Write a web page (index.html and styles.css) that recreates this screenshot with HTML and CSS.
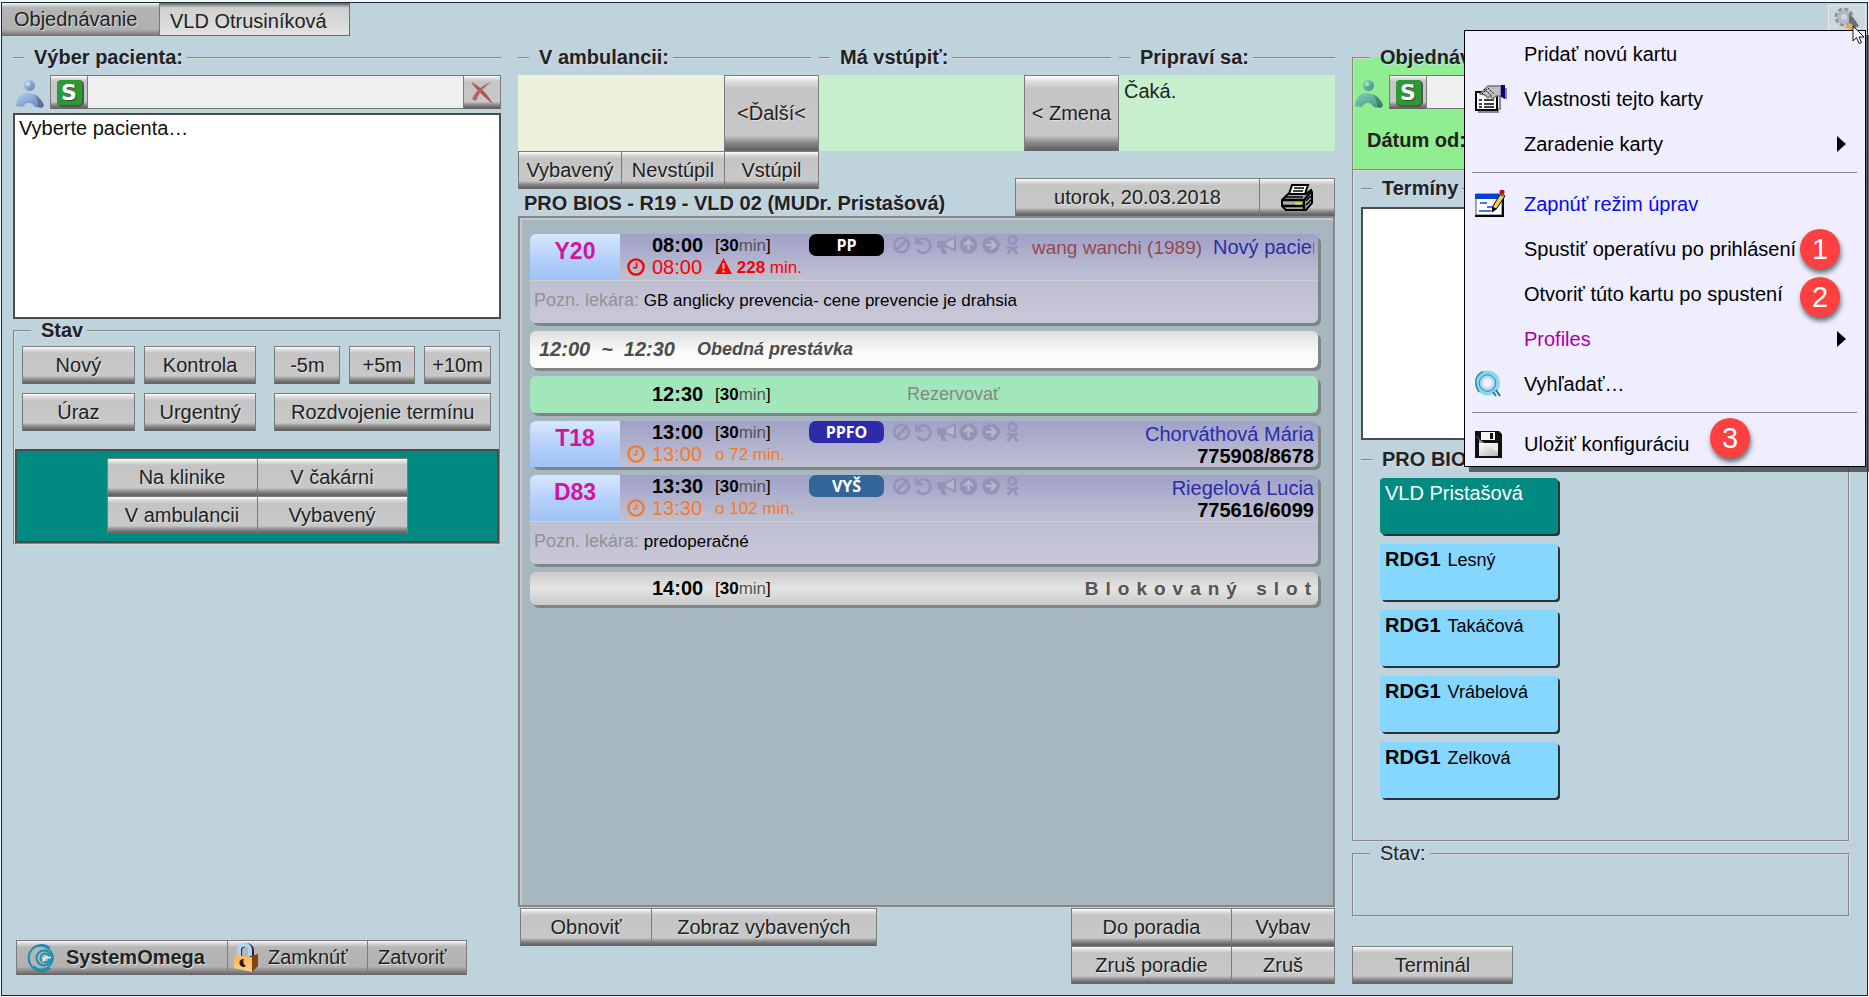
FILE: index.html
```html
<!DOCTYPE html>
<html lang="sk">
<head>
<meta charset="utf-8">
<title>VLD Otrusiníková</title>
<link rel="stylesheet" href="styles.css">
</head>
<body>
<svg class="sprite" aria-hidden="true">
  <defs>
    <linearGradient id="blueMan" x1="0" y1="0" x2="1" y2="1"><stop offset="0" stop-color="#b4cdec"/><stop offset="1" stop-color="#5f7fb5"/></linearGradient>
    <linearGradient id="greenMan" x1="0" y1="0" x2="1" y2="1"><stop offset="0" stop-color="#84cdb8"/><stop offset="1" stop-color="#3f927c"/></linearGradient>
    <radialGradient id="lens"><stop offset="0" stop-color="#ffffff"/><stop offset=".35" stop-color="#e8f0ff"/><stop offset="1" stop-color="#6f9cf0"/></radialGradient>
    <linearGradient id="disk" x1="0" y1="0" x2="1" y2="1"><stop offset="0" stop-color="#fff"/><stop offset="1" stop-color="#b5b5b5"/></linearGradient>
    <linearGradient id="lockBody" x1="0" y1="0" x2="0" y2="1"><stop offset="0" stop-color="#f3b562"/><stop offset="1" stop-color="#ffd084"/></linearGradient>
  </defs>
  <symbol id="man" viewBox="0 0 28 28">
    <path d="M0 26C1 17 5 13 11 13c8 0 14 5 17 12l-2 3-7-1c-2-2-3-4-6-4-3 0-5 2-6 4z"/>
    <path d="M18 14c5 2 8 6 10 11l-2 3-4-1c0-5-1-9-4-13z" fill="#000" opacity=".2"/>
    <circle cx="13.500" cy="5.500" r="5.500"/>
    <circle cx="12" cy="4" r="2.200" fill="#fff" opacity=".45"/>
  </symbol>
  <symbol id="clock" viewBox="0 0 18 18">
    <circle cx="9" cy="9" r="7.600" fill="none" stroke="currentColor" stroke-width="2.400"/>
    <path d="M9.500 4.500v5.200H6" fill="none" stroke="currentColor" stroke-width="1.600"/>
  </symbol>
  <symbol id="flags" viewBox="0 0 127 20">
    <g fill="none" stroke="currentColor" stroke-width="2.500">
      <circle cx="8.500" cy="10" r="7.300"/><path d="M3.500 15 13.500 5"/>
      <path d="M25 5.500A7.300 7.300 0 1 1 24 14.500"/>
      <circle cx="119.500" cy="5" r="3.800"/>
      <path d="M114 11.500c3.500 2 7.500 2 11 0M119.500 13l-5 6M119.500 13l5 6"/>
    </g>
    <path fill="currentColor" d="M22 1v8.500h8.500zM44 6h8l11-5v16l-9-4.500-3 .5 3 6h-5l-2-6h-3z"/>
    <path fill="#b4b6d0" d="M53.500 7.500 61 4v9.500l-7.500-3z"/>
    <circle cx="75.500" cy="10" r="8.800" fill="currentColor"/>
    <path d="M75.500 15V6M71 10l4.500-4.500L80 10" fill="none" stroke="#b5b7d0" stroke-width="2.400"/>
    <circle cx="98" cy="10" r="8.800" fill="currentColor"/>
    <path d="M93 10h9M98 5.500 102.500 10 98 14.500" fill="none" stroke="#b5b7d0" stroke-width="2.400"/>
  </symbol>
</svg>

<div class="window">
  <header class="topbar">
    <div class="tabs" role="tablist">
      <button class="tab" role="tab">Objednávanie</button>
      <button class="tab tab-active" role="tab" aria-selected="true">VLD Otrusiníková</button>
    </div>
    <div class="settings">
      <button class="gear" aria-label="Nastavenia">
        <svg width="26" height="24" viewBox="0 0 26 24">
          <circle cx="10" cy="9" r="7" fill="none" stroke="#8d919f" stroke-width="5" stroke-dasharray="3.600 1.900"/>
          <circle cx="10" cy="9" r="5" fill="none" stroke="#b3b6c8" stroke-width="4"/>
          <path d="m15 5 6 7 4 6-4 2-6-6z" fill="#6d6f72"/>
          <path d="m10 19 5-4 5 5-1 3z" fill="#e7ab55"/>
        </svg>
      </button>
      <ul class="menu" role="menu">
        <li><button class="menu-item" role="menuitem"><span class="menu-icon"></span>Pridať novú kartu</button></li>
        <li><button class="menu-item" role="menuitem"><span class="menu-icon">
          <svg width="32" height="28" viewBox="0 0 32 28">
            <path d="M3 27h20v-3h2V11" fill="none" stroke="#888" stroke-width="2"/>
            <rect x="1" y="7" width="21" height="18" fill="#fff" stroke="#000" stroke-width="2"/>
            <path d="M4 15h3M4 19h3M4 22h3M9 15h10M9 19h10M9 22h10" stroke="#000" stroke-width="1.600"/>
            <path d="m5 9 8-8h13v10h-5l-3 3-3-3-2 2-3-3z" fill="#c0c0c0" stroke="#777" stroke-width="1.400"/>
            <path d="m9 4 8 7M13 3l6 6M7 9l5-5" stroke="#000" stroke-dasharray="1.500 1"/>
            <path d="M26 0h4v14l-4-2z" fill="#00008b"/><path d="M30 3h2v11h-2z" fill="#888"/>
          </svg></span>Vlastnosti tejto karty</button></li>
        <li><button class="menu-item" role="menuitem"><span class="menu-icon"></span>Zaradenie karty<span class="arrow"></span></button></li>
        <li class="menu-line" role="separator"></li>
        <li><button class="menu-item menu-blue" role="menuitem"><span class="menu-icon">
          <svg width="32" height="28" viewBox="0 0 32 28">
            <rect x="1" y="4" width="26" height="21" fill="#fff" stroke="#555"/>
            <path d="M0 4h26v5H0z" fill="#0a3fd6"/><path d="M0 26h28V8" fill="none" stroke="#000" stroke-width="2"/>
            <path d="M5 13h7M12 17h8M4 21h12" stroke="#0a49dc" stroke-width="1.600"/>
            <path d="m17 22 1-6 8-13 4 3-8 12z" fill="#f7cd45" stroke="#000"/>
            <path d="m17 22 1-5 4 2z" fill="#000"/><path d="m24 5 2-3 4 3-2 2z" fill="#2a9b36"/><circle cx="27" cy="2" r="2.500" fill="#d40024"/>
          </svg></span>Zapnúť režim úprav</button></li>
        <li><button class="menu-item" role="menuitem"><span class="menu-icon"></span>Spustiť operatívu po prihlásení</button></li>
        <li><button class="menu-item" role="menuitem"><span class="menu-icon"></span>Otvoriť túto kartu po spustení</button></li>
        <li><button class="menu-item menu-violet" role="menuitem"><span class="menu-icon"></span>Profiles<span class="arrow"></span></button></li>
        <li><button class="menu-item" role="menuitem"><span class="menu-icon">
          <svg width="28" height="28" viewBox="0 0 28 28">
            <circle cx="12.500" cy="13" r="10.500" fill="url(#lens)" stroke="#86dbe6" stroke-width="4"/>
            <path d="M4 22C-2 12 1 5 8 1.500" fill="none" stroke="#3b8fa0" stroke-width="1.500"/>
            <circle cx="12.500" cy="13" r="8.300" fill="none" stroke="#3b8fa0"/>
            <path d="m18 22 3 4M21 20l4 6" stroke="#287a86" stroke-width="2"/>
          </svg></span>Vyhľadať…</button></li>
        <li class="menu-line" role="separator"></li>
        <li><button class="menu-item" role="menuitem"><span class="menu-icon">
          <svg width="27" height="27" viewBox="0 0 27 27">
            <path d="M0 0h24l3 3v24H0z" fill="#111"/>
            <path d="M6 1h14v8H6z" fill="#f5f5f5"/><path d="M15 2h3v6h-3z" fill="#111"/>
            <path d="M4 12h19v13H4z" fill="url(#disk)"/><path d="M0 5 23 22V12H4V7z" fill="#fff" opacity=".55"/>
          </svg></span>Uložiť konfiguráciu</button></li>
        <li class="pin pin-1">1</li>
        <li class="pin pin-2">2</li>
        <li class="pin pin-3">3</li>
      </ul>
      <svg class="pointer" width="13" height="20" viewBox="0 0 13 20"><path d="M1 1v15l3.500-3.500 2.500 6 2.500-1-2.500-5.500H12z" fill="#fff" stroke="#111"/></svg>
    </div>
  </header>

  <main class="columns">
    <section class="column">
      <fieldset class="rule">
        <legend>Výber pacienta:</legend>
        <div class="search">
          <svg class="man man-blue" width="28" height="28"><use href="#man"/></svg>
          <button class="btn btn-square" aria-label="Hľadať pacienta"><span class="s-mark">S</span></button>
          <input class="search-input" type="text" aria-label="Pacient">
          <button class="btn btn-square" aria-label="Zrušiť výber">
            <svg width="22" height="22" viewBox="0 0 22 22"><path d="M1 2c8 4 14 10 20 20-8-7-14-12-20-20z" fill="#a55" stroke="#a55"/><path d="M20 1C12 7 8 12 5 20l-4-2C4 11 11 4 20 1z" fill="#b96464"/></svg>
          </button>
        </div>
        <textarea class="patient" aria-label="Vybraný pacient">Vyberte pacienta…</textarea>
      </fieldset>
      <fieldset class="box state">
        <legend>Stav</legend>
        <div class="state-grid">
          <button class="btn">Nový</button>
          <button class="btn">Kontrola</button>
          <button class="btn btn-apart">-5m</button>
          <button class="btn">+5m</button>
          <button class="btn">+10m</button>
          <button class="btn">Úraz</button>
          <button class="btn">Urgentný</button>
          <button class="btn btn-apart span-3">Rozdvojenie termínu</button>
        </div>
        <div class="place">
          <button class="btn">Na klinike</button>
          <button class="btn">V čakárni</button>
          <button class="btn">V ambulancii</button>
          <button class="btn">Vybavený</button>
        </div>
      </fieldset>
      <div class="system">
        <button class="btn sys sys-main">
          <svg width="28" height="28" viewBox="0 0 28 28" fill="none" stroke="#168fae">
            <path d="M24 4A13 13 0 1 0 24 24" stroke-width="2"/><path d="M8 3c12-4 22 6 18 15-3 8-14 10-18 4" stroke-width="1.600"/><circle cx="18" cy="14" r="7.500" stroke-width="2"/><circle cx="19" cy="14" r="4.500" stroke-width="1.800"/><path d="M25 13.500h-6l-2 4" stroke="#fff" stroke-width="1.600"/>
          </svg>SystemOmega</button>
        <button class="btn sys sys-lock">
          <svg width="24" height="29" viewBox="0 0 24 29">
            <path d="M6 14V8c0-8 12-8 12 0v6" fill="none" stroke="#222" stroke-width="4"/><path d="M5 13V7c0-7 11-7 11 0v6" fill="none" stroke="#b3d3f4" stroke-width="4"/>
            <path d="M18 13l6-2v12l-6 6z" fill="#80420f"/><path d="M0 12l18 2v15L0 25z" fill="url(#lockBody)"/><path d="M10 16a4 4 0 1 0 2 7 5 5 0 0 1-2-7z" fill="#3a1c02"/>
          </svg>Zamknúť</button>
        <button class="btn sys sys-close">Zatvoriť</button>
      </div>
    </section>

    <section class="column">
      <div class="stages">
        <div>
          <fieldset class="rule stage-rule"><legend>V ambulancii:</legend></fieldset>
          <div class="stage"><div class="slot slot-cream"></div><button class="btn btn-tall">&lt;Ďalší&lt;</button></div>
          <div class="stage-actions"><button class="btn">Vybavený</button><button class="btn">Nevstúpil</button><button class="btn btn-last">Vstúpil</button></div>
        </div>
        <div>
          <fieldset class="rule stage-rule"><legend>Má vstúpiť:</legend></fieldset>
          <div class="stage"><div class="slot"></div><button class="btn btn-tall">&lt; Zmena</button></div>
        </div>
        <div>
          <fieldset class="rule"><legend>Pripraví sa:</legend></fieldset>
          <div class="stage"><div class="slot">Čaká.</div></div>
        </div>
      </div>
      <div class="list-head">
        <h1>PRO BIOS - R19 - VLD 02 (MUDr. Pristašová)</h1>
        <div class="date-bar">
          <button class="btn date">utorok, 20.03.2018</button>
          <button class="btn print" aria-label="Tlačiť">
            <svg width="32" height="27" viewBox="0 0 32 27">
              <path d="m1 16 6-6h18l5-4 1 2v11l-6 7H5l-4-4z" fill="#aaa" stroke="#000" stroke-width="2"/>
              <path d="m11 1h16l-3 9H8z" fill="#fff" stroke="#000" stroke-width="2"/><path d="M13 4h10M12 7h10" stroke="#000" stroke-width="1.400"/>
              <path d="M1 16h22l7-8M23 16v10M2 22h21" stroke="#000" stroke-width="2.400" fill="none"/><path d="M14 19.500h6" stroke="#f3e600" stroke-width="2"/><path d="M5 13h17M25 17l5-5M25 21l5-5" stroke="#000" stroke-width="1.600"/>
            </svg>
          </button>
        </div>
      </div>
      <div class="list">
        <article class="card card-visit">
          <div class="card-head">
            <div class="code">Y20</div>
            <div class="times late">
              <strong class="time">08:00</strong><span class="length">[<b>30</b><i>min</i>]</span>
              <svg class="clock" width="18" height="18"><use href="#clock"/></svg><span class="real">08:00</span>
              <span class="delay"><svg width="17" height="16" viewBox="0 0 17 16"><path d="M8.500 0 17 16H0z" fill="red"/><path d="M8.500 5v6M8.500 12.500v2" stroke="#d8c0cc" stroke-width="2.200"/></svg> <b>228</b> min.</span>
            </div>
            <span class="badge">PP</span>
            <svg class="flags" width="127" height="20"><use href="#flags"/></svg>
            <div class="who who-new"><span class="other">wang wanchi (1989)</span><span>Nový pacient</span></div>
          </div>
          <p class="note"><span>Pozn. lekára:</span> GB anglicky prevencia- cene prevencie je drahsia</p>
        </article>
        <article class="card card-break"><span class="break-time">12:00</span><span class="break-dash">~</span><span class="break-time">12:30</span><span class="break-name">Obedná prestávka</span></article>
        <article class="card card-free">
          <div class="times"><strong class="time">12:30</strong><span class="length">[<b>30</b><i>min</i>]</span></div>
          <span class="reserve">Rezervovať</span>
        </article>
        <article class="card card-visit">
          <div class="card-head">
            <div class="code">T18</div>
            <div class="times soon">
              <strong class="time">13:00</strong><span class="length">[<b>30</b><i>min</i>]</span>
              <svg class="clock" width="18" height="18"><use href="#clock"/></svg><span class="real">13:00</span><span class="delay">o 72 min.</span>
            </div>
            <span class="badge badge-blue">PPFO</span>
            <svg class="flags" width="127" height="20"><use href="#flags"/></svg>
            <div class="who"><span>Chorváthová Mária</span><strong>775908/8678</strong></div>
          </div>
        </article>
        <article class="card card-visit">
          <div class="card-head">
            <div class="code">D83</div>
            <div class="times soon">
              <strong class="time">13:30</strong><span class="length">[<b>30</b><i>min</i>]</span>
              <svg class="clock" width="18" height="18"><use href="#clock"/></svg><span class="real">13:30</span><span class="delay">o 102 min.</span>
            </div>
            <span class="badge badge-steel">VYŠ</span>
            <svg class="flags" width="127" height="20"><use href="#flags"/></svg>
            <div class="who"><span>Riegelová Lucia</span><strong>775616/6099</strong></div>
          </div>
          <p class="note"><span>Pozn. lekára:</span> predoperačné</p>
        </article>
        <article class="card card-blocked">
          <div class="times"><strong class="time">14:00</strong><span class="length">[<b>30</b><i>min</i>]</span></div>
          <span class="blocked">Blokovaný slot</span>
        </article>
      </div>
      <div class="list-foot">
        <div class="foot-left"><button class="btn">Obnoviť</button><button class="btn">Zobraz vybavených</button></div>
        <div class="foot-right"><button class="btn">Do poradia</button><button class="btn">Vybav</button><button class="btn">Zruš poradie</button><button class="btn">Zruš</button></div>
      </div>
    </section>

    <section class="column">
      <fieldset class="box order">
        <legend>Objednávanie</legend>
        <div class="search">
          <svg class="man man-green" width="28" height="28"><use href="#man"/></svg>
          <button class="btn btn-square" aria-label="Hľadať"><span class="s-mark">S</span></button>
          <input class="search-input" type="text" aria-label="Objednať pacienta">
        </div>
        <div class="since">Dátum od:</div>
      </fieldset>
      <div class="terms">
        <fieldset class="rule">
          <legend>Termíny</legend>
          <div class="terms-box"></div>
        </fieldset>
        <fieldset class="rule">
          <legend>PRO BIOS - R19</legend>
          <div class="doctors">
            <button class="doctor doctor-on">VLD Pristašová</button>
            <button class="doctor"><b>RDG1</b> Lesný</button>
            <button class="doctor"><b>RDG1</b> Takáčová</button>
            <button class="doctor"><b>RDG1</b> Vrábelová</button>
            <button class="doctor"><b>RDG1</b> Zelková</button>
          </div>
        </fieldset>
      </div>
      <fieldset class="box status"><legend>Stav:</legend></fieldset>
      <button class="btn terminal">Terminál</button>
    </section>
  </main>
</div>
</body>
</html>
```

FILE: styles.css
```css
* { box-sizing: border-box; }

body {
  margin: 0;
  background: #eef6fa;
  color: #222;
  font: 20px/23px "Liberation Sans", Arial, sans-serif;
  overflow: hidden;
}

button, input, textarea { font: inherit; color: inherit; margin: 0; border-radius: 0; }
button { cursor: pointer; white-space: nowrap; }
.sprite { position: absolute; width: 0; height: 0; }

.window {
  display: flex;
  flex-direction: column;
  min-height: calc(100vh - 3px);
  margin: 2px 1px 1px;
  border: 1px solid #1e2c33;
  background: #bfd3dd;
}

/* top bar */
.topbar { display: flex; justify-content: space-between; height: 33px; }
.tabs { display: flex; }
.tab {
  padding: 0 16px 0 12px;
  border: 0;
  border-right: 1px solid #777;
  background: linear-gradient(#f4f4f4, #b4b4b4 14%, #b0b0b0 80%, #6f6f6f);
  text-shadow: 1px 1px 1px #ddd;
  text-align: left;
  min-width: 158px;
}
.tab-active {
  min-width: 190px;
  padding: 3px 12px 0 10px;
  border: 1px solid #6a6a6a;
  border-left: 0;
  background: linear-gradient(#777, #cfcfcf 12%, #e2e2e2);
}
.settings { position: relative; padding: 2px 1px 0; }
.gear {
  width: 38px;
  height: 26px;
  padding: 2px 0 0;
  border: 1px solid #e3ebef;
  background: #cbd8de;
}
.gear svg { display: block; margin: 0 auto; }
.pointer { position: absolute; z-index: 3; top: 22px; right: 2px; }

.menu {
  position: absolute;
  z-index: 2;
  top: 27px;
  right: 1px;
  width: 402px;
  margin: 0;
  padding: 0;
  list-style: none;
  border: 1px solid #000;
  background: #eeeeff;
  box-shadow: 5px 5px 0 rgba(40, 50, 55, .7);
  color: #000;
}
.menu-item {
  display: flex;
  align-items: center;
  width: 100%;
  height: 45px;
  padding: 1px 19px 0 10px;
  border: 0;
  background: none;
  text-align: left;
}
.menu-icon { flex: none; width: 49px; }
.menu-icon svg { display: block; }
.menu-blue { color: #0808f5; }
.menu-violet { color: #a800a8; }
.arrow {
  margin-left: auto;
  border: 8px solid transparent;
  border-left: 9px solid #000;
  border-right: 0;
}
.menu-line { height: 15px; padding: 6px 8px 0 7px; }
.menu-line::before { content: ""; display: block; border-top: 1px solid #888; }
.pin {
  position: absolute;
  width: 40px;
  height: 40px;
  border-radius: 50%;
  background: #ff4040;
  box-shadow: 1px 4px 5px rgba(0, 0, 0, .55);
  color: #fff;
  font-size: 29px;
  line-height: 40px;
  text-align: center;
}
.pin-1 { top: 198px; right: 25px; }
.pin-2 { top: 246px; right: 25px; }
.pin-3 { top: 387px; right: 115px; }

/* shared controls */
.btn {
  height: 38px;
  padding: 0 4px;
  border: 1px solid #7b7b7b;
  border-bottom-color: #666;
  background: linear-gradient(#fff, #dcdcdc 8%, #c4c4c4 18%, #c8c8c8 80%, #8a8a8a 90%, #606060);
  text-shadow: 1px 1px 1px #e4e4e4;
}
.btn-square { flex: none; display: grid; place-items: center; width: 38px; height: 34px; padding: 0; }
.s-mark {
  width: 25px;
  height: 25px;
  border-radius: 4px;
  background: #2c9a34;
  box-shadow: 1px 1px 0 1px #4a5a4c;
  color: #fff;
  font: bold 22px/25px "DejaVu Sans", sans-serif;
  text-shadow: 1px 1px 1px #444;
}

fieldset { min-width: 0; margin: 0; padding: 0; border: 2px groove #dcd8d4; }
legend { padding: 0 4px 0 10px; margin-left: 11px; font-weight: bold; text-shadow: 1px 1px 1px #dde; }
.rule { border-width: 2px 0 0; }
.box legend { margin-left: 16px; }

.columns {
  flex: 1;
  display: grid;
  grid-template-columns: 488fr 817fr 498fr;
  gap: 17px;
  padding: 10px 17px 11px 11px;
}
.column { display: flex; flex-direction: column; min-width: 0; }

.search { display: flex; align-items: center; padding-top: 6px; }
.man { flex: none; margin: 3px 6px 0 3px; }
.man-blue { fill: url(#blueMan); }
.man-green { fill: url(#greenMan); }
.search-input { flex: 1; min-width: 0; height: 34px; border: 1px solid #777; border-width: 1px 0; background: #efefef; }

/* patient column */
.patient {
  display: block;
  width: 100%;
  height: 206px;
  margin-top: 4px;
  padding: 2px 4px;
  border: 2px solid #4c4c4c;
  background: #fff;
  color: #111;
  resize: none;
}
.state-grid {
  display: grid;
  grid-template-columns: 113fr 113fr 75fr 66fr 67fr;
  gap: 9px;
  padding: 4px 8px 18px 7px;
}
.btn-apart { margin-left: 9px; }
.span-3 { grid-column: span 3; }
.place {
  display: grid;
  grid-template-columns: 150px 151px;
  justify-content: center;
  padding: 7px 0;
  border: 2px solid #4c4c4c;
  background: #008a82;
}
.place .btn:nth-child(odd) { border-right: 0; }
.system { display: flex; margin: auto 0 9px 3px; }
.sys {
  display: flex;
  align-items: center;
  height: 35px;
  padding: 0 17px 0 10px;
  background: linear-gradient(#f6f6f6, #b6b6b6 18%, #b2b2b2 78%, #6a6a6a);
}
.sys + .sys { border-left: 0; }
.sys-main { gap: 12px; padding-left: 9px; width: 212px; font-weight: bold; }
.sys-lock { gap: 10px; padding-left: 6px; width: 140px; }
.sys-close { width: 99px; }

/* queue column */
.stages { display: grid; grid-template-columns: 301fr 300fr 216fr; }
.stage-rule { margin-right: 8px; }
.stage { display: flex; padding-top: 6px; }
.slot { flex: 1; height: 76px; padding: 5px; background: #c6f0cd; }
.slot-cream { background: #ebf1dd; }
.btn-tall { flex: none; width: 95px; height: 76px; }
.stage-actions { display: flex; }
.stage-actions .btn { flex: 1; border-right: 0; }
.stage-actions .btn-last { flex: none; width: 95px; border-right: 1px solid #7b7b7b; }
.list-head { display: flex; align-items: flex-end; justify-content: space-between; margin-top: -11px; }
h1 { margin: 0; padding: 0 0 1px 6px; font-size: 20px; text-shadow: 1px 1px 1px #dde; }
.date-bar { display: flex; }
.date { width: 244px; border-right: 0; }
.print { display: grid; place-items: center; width: 76px; padding: 0; }
.list {
  flex: 1;
  display: flex;
  flex-direction: column;
  gap: 8px;
  padding: 16px 15px 16px 10px;
  border: 2px solid #868686;
  background: #a6b7bf;
  box-shadow: inset 2px 2px 0 #c4cbce, 1px 1px 0 #d8d4d0;
}
.card { border-radius: 6px; box-shadow: 3px 3px 0 #7e8487; color: #000; }
.card-visit { background: linear-gradient(#9fa1c9, #bcbdd0 40px, #c8c7d8 85px); }
.card-head { display: flex; height: 46px; }
.code {
  flex: none;
  width: 90px;
  padding-top: 6px;
  border-radius: 6px 0 0 0;
  background: linear-gradient(#d8e7fe, #b0cdf8 60%, #9fc3f6);
  color: #d015a0;
  font-size: 23px;
  font-weight: bold;
  text-align: center;
}
.times {
  flex: none;
  display: grid;
  grid-template-columns: 25px 63px 94px;
  grid-auto-rows: 22px;
  align-items: center;
  padding-left: 7px;
  color: #000;
}
.time { grid-column: 2; }
.length, .delay { font-size: 17px; white-space: nowrap; }
.length i { font-style: normal; color: #555; }
.late .clock, .late .real, .late .delay { color: #fc0000; }
.soon .clock, .soon .real, .soon .delay { color: #f57a28; }
.delay svg { vertical-align: -1px; }
.badge {
  flex: none;
  width: 75px;
  height: 22px;
  border-radius: 7px;
  background: #000;
  color: #fff;
  font: bold 16px/23px "Open Sans", "Noto Sans", sans-serif;
  text-align: center;
}
.badge-blue { background: #2c2ca8; }
.badge-steel { background: #326699; }
.flags { flex: none; margin: 1px 12px 0 9px; color: #9294b4; }
.who {
  flex: 1;
  display: flex;
  flex-direction: column;
  min-width: 0;
  align-items: flex-end;
  margin-right: 4px;
  padding-top: 2px;
  overflow: hidden;
  color: #2c2ca8;
  line-height: 22px;
  white-space: nowrap;
}
.who strong { color: #000; }
.who-new { flex-direction: row; align-items: baseline; gap: 11px; }
.other { color: #96484f; font-size: 19px; }
.note { margin: 0; padding: 0 4px 3px; border-top: 1px solid #cfcfcf; font-size: 17px; line-height: 38px; }
.note span { color: #929292; font-size: 18px; }
.card-break {
  display: flex;
  align-items: center;
  height: 37px;
  padding: 0 9px;
  background: linear-gradient(#dedede, #fbfbfb 60%);
  color: #4c4c4c;
  font-weight: bold;
  font-style: italic;
}
.break-dash { padding: 0 11px; }
.break-name { margin-left: 22px; font-size: 18px; }
.card-free, .card-blocked { display: flex; align-items: center; padding-left: 90px; }
.card-free { height: 37px; background: #a2e7bb; }
.card-blocked { height: 33px; background: linear-gradient(#cbcbcb, #e4e4e4 50%, #c9c9c9); }
.reserve { margin-left: 98px; color: #7f8a82; font-size: 18px; }
.blocked { margin-left: auto; color: #555; font-size: 19px; font-weight: bold; letter-spacing: 7px; }
.list-foot { display: flex; align-items: flex-start; justify-content: space-between; padding-top: 1px; }
.foot-left { display: flex; padding-left: 2px; }
.foot-left .btn:first-child { width: 131px; border-right: 0; }
.foot-left .btn:last-child { width: 226px; }
.foot-right { display: grid; grid-template-columns: 160px 104px; }
.foot-right .btn:nth-child(odd) { border-right: 0; }

/* ordering column */
.order { border-bottom: 0; background: #90ee90; }
.order .man { margin: 3px 6px 0 1px; }
.since { padding: 20px 13px 17px; font-weight: bold; }
.terms { flex: 1; padding: 6px 7px 0; border: 2px groove #dcd8d4; }
.terms-box { height: 233px; margin: 7px 0 8px; border: 2px solid #4c4c4c; background: #fff; }
.doctors { display: flex; flex-direction: column; align-items: flex-start; gap: 10px; padding: 7px 0 39px 19px; }
.doctor {
  display: flex;
  align-items: baseline;
  gap: 7px;
  width: 178px;
  height: 56px;
  padding: 4px 5px;
  border: 0;
  border-radius: 4px;
  background: #86d7ff;
  box-shadow: 2px 2px 0 #2c3338;
  color: #000;
  font-size: 18px;
  text-align: left;
}
.doctor b, .doctor-on { font-size: 20px; }
.doctor-on { background: #008a82; color: #fff; }
.status { height: 75px; }
.status legend { font-weight: normal; }
.terminal { align-self: flex-start; width: 161px; margin-top: 29px; }
```
